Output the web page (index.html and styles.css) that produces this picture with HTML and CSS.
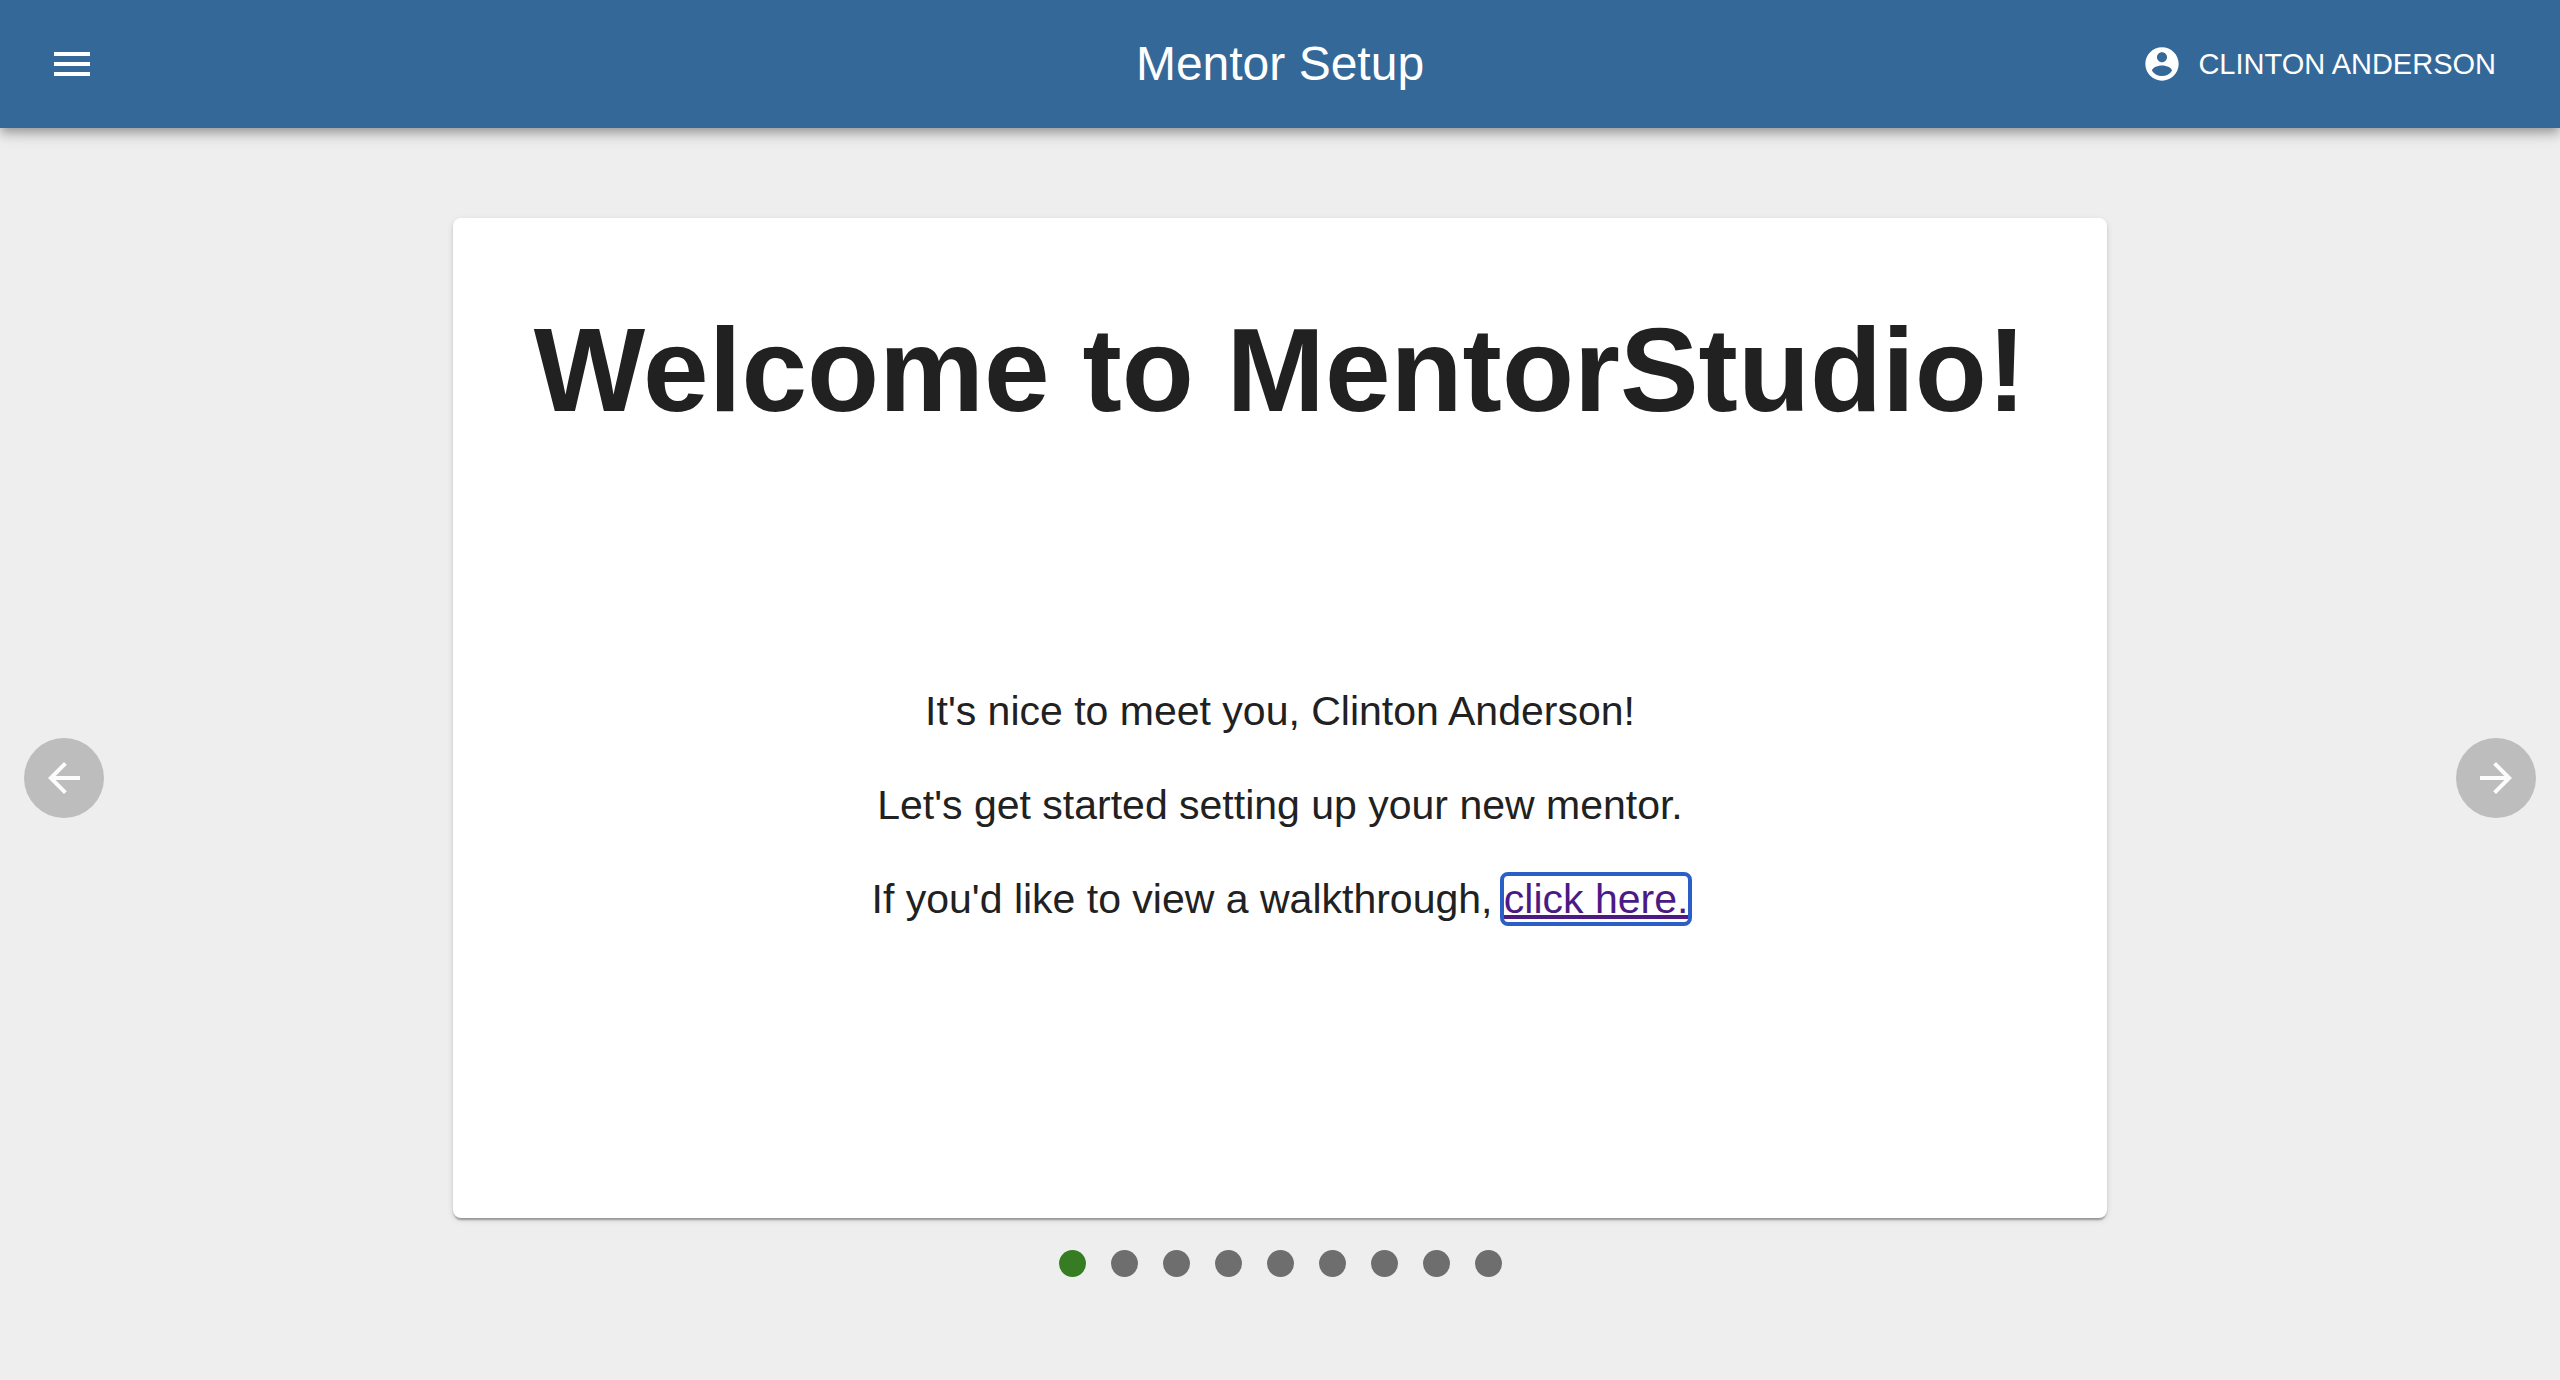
FILE: index.html
```html
<!DOCTYPE html>
<html lang="en">
<head>
  <meta charset="utf-8">
  <meta name="viewport" content="width=device-width, initial-scale=1">
  <title>Mentor Setup</title>
  <link rel="stylesheet" href="styles.css">
</head>
<body>
  <header class="app-bar">
    <button class="menu-button" type="button" aria-label="Open menu">
      <svg class="icon" viewBox="0 0 24 24" aria-hidden="true"><path d="M3 18h18v-2H3v2zm0-5h18v-2H3v2zm0-7v2h18V6H3z"/></svg>
    </button>
    <h2 class="app-title">Mentor Setup</h2>
    <button class="account-button" type="button">
      <svg class="icon icon-small" viewBox="0 0 24 24" aria-hidden="true"><path d="M12 2C6.48 2 2 6.48 2 12s4.48 10 10 10 10-4.48 10-10S17.52 2 12 2zm0 3c1.66 0 3 1.34 3 3s-1.34 3-3 3-3-1.34-3-3 1.34-3 3-3zm0 14.2c-2.5 0-4.71-1.28-6-3.22.03-1.99 4-3.08 6-3.08 1.99 0 5.97 1.09 6 3.08-1.29 1.94-3.5 3.22-6 3.22z"/></svg>
      CLINTON ANDERSON
    </button>
  </header>

  <main class="setup">
    <button class="arrow-button" type="button" aria-label="Previous slide">
      <svg class="icon" viewBox="0 0 24 24" aria-hidden="true"><path d="M20 11H7.83l5.59-5.59L12 4l-8 8 8 8 1.41-1.41L7.83 13H20v-2z"/></svg>
    </button>

    <div class="carousel">
      <section class="card">
        <h1 class="card-title">Welcome to MentorStudio!</h1>
        <div class="card-text">
          <p>It's nice to meet you, Clinton Anderson!</p>
          <p>Let's get started setting up your new mentor.</p>
          <p>If you'd like to view a walkthrough, <a class="walkthrough-link" href="#walkthrough">click here.</a></p>
        </div>
      </section>
      <nav class="dots" aria-label="Setup steps">
        <button class="dot dot-active" type="button" aria-label="Step 1" aria-current="step"></button>
        <button class="dot" type="button" aria-label="Step 2"></button>
        <button class="dot" type="button" aria-label="Step 3"></button>
        <button class="dot" type="button" aria-label="Step 4"></button>
        <button class="dot" type="button" aria-label="Step 5"></button>
        <button class="dot" type="button" aria-label="Step 6"></button>
        <button class="dot" type="button" aria-label="Step 7"></button>
        <button class="dot" type="button" aria-label="Step 8"></button>
        <button class="dot" type="button" aria-label="Step 9"></button>
      </nav>
    </div>

    <button class="arrow-button" type="button" aria-label="Next slide">
      <svg class="icon" viewBox="0 0 24 24" aria-hidden="true"><path d="M12 4l-1.41 1.41L16.17 11H4v2h12.17l-5.58 5.59L12 20l8-8z"/></svg>
    </button>
  </main>
</body>
</html>
```

FILE: styles.css
```css
* {
  box-sizing: border-box;
}

body {
  display: flex;
  flex-direction: column;
  min-height: 100vh;
  margin: 0;
  background: #eeeeee;
  color: #212121;
  font-family: "Liberation Sans", Helvetica, Arial, sans-serif;
}

h1,
h2,
p {
  margin: 0;
}

button {
  padding: 0;
  border: 0;
  background: none;
  color: inherit;
  font: inherit;
  cursor: pointer;
}

.icon {
  display: block;
  width: 48px;
  height: 48px;
  fill: currentColor;
}

.icon-small {
  width: 40px;
  height: 40px;
}

/* Top bar */
.app-bar {
  display: grid;
  grid-template-columns: 1fr auto 1fr;
  align-items: center;
  min-height: 128px;
  padding: 0 48px;
  background: #346898;
  color: #ffffff;
  box-shadow:
    0 4px 8px -2px rgba(0, 0, 0, 0.2),
    0 8px 10px 0 rgba(0, 0, 0, 0.14),
    0 2px 20px 0 rgba(0, 0, 0, 0.12);
}

.menu-button {
  justify-self: start;
}

.app-title {
  font-size: 48px;
  font-weight: 400;
  line-height: 64px;
}

.account-button {
  display: flex;
  align-items: center;
  justify-self: end;
  gap: 16px;
  padding: 12px 16px;
  font-size: 29px;
  line-height: 48px;
}

/* Carousel */
.setup {
  display: grid;
  flex: 1;
  grid-template-columns: auto 1fr auto;
  align-items: center;
  padding: 48px 24px 0;
}

.arrow-button {
  padding: 16px;
  border-radius: 50%;
  background: #bdbdbd;
  color: #fcfcfc;
}

.carousel {
  display: flex;
  flex-direction: column;
  align-items: center;
  align-self: start;
  gap: 32px;
  padding: 42px 24px;
}

.card {
  display: flex;
  flex-direction: column;
  width: 100%;
  max-width: 1654px;
  min-height: 1000px;
  padding: 80px 80px 50px;
  border-radius: 8px;
  background: #ffffff;
  text-align: center;
  box-shadow:
    0 4px 2px -2px rgba(0, 0, 0, 0.2),
    0 2px 2px 0 rgba(0, 0, 0, 0.14),
    0 2px 6px 0 rgba(0, 0, 0, 0.12);
}

.card-title {
  font-size: 118px;
  font-weight: 700;
  line-height: 144px;
}

.card-text {
  display: flex;
  flex: 1;
  flex-direction: column;
  justify-content: center;
  gap: 30px;
  font-size: 41px;
  line-height: 64px;
}

.walkthrough-link {
  border-radius: 4px;
  outline: 4px solid #2a5fc8;
  color: #4b1a85;
  text-decoration-thickness: 4px;
}

/* Step dots */
.dots {
  display: flex;
  gap: 25px;
}

.dot {
  width: 27px;
  height: 27px;
  border-radius: 50%;
  background: #6e6e6e;
}

.dot-active {
  background: #367c22;
}
```
